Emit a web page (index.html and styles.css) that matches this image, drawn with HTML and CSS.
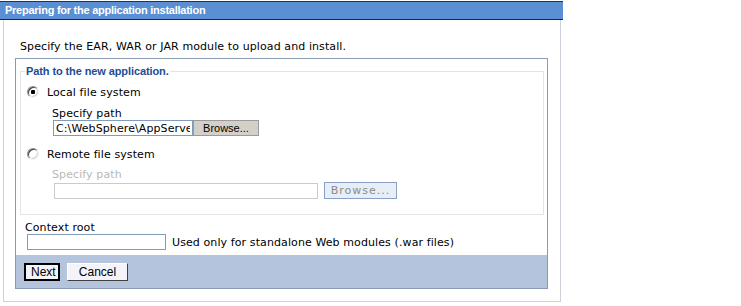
FILE: index.html
```html
<!DOCTYPE html>
<html lang="en">
<head>
    <meta charset="UTF-8">
    <title>Preparing for the application installation</title>
    <link rel="stylesheet" href="styles.css">
</head>
<body>

    <div class="portlet">
        <div class="title-bar">Preparing for the application installation</div>

        <div class="panel">
            <p class="intro">Specify the EAR, WAR or JAR module to upload and install.</p>

            <div class="box">
                <fieldset class="path-set">
                    <legend>Path to the new application.</legend>

                    <label class="option">
                        <input type="radio" name="path" class="radio" checked>
                        <span>Local file system</span>
                    </label>
                    <div class="path-field">
                        <div class="field-label">Specify path</div>
                        <div class="field-row">
                            <input type="text" class="text-input local-input" value="C:\WebSphere\AppServer\installableApps\">
                            <button class="browse-btn">Browse...</button>
                        </div>
                    </div>

                    <label class="option remote">
                        <input type="radio" name="path" class="radio">
                        <span>Remote file system</span>
                    </label>
                    <div class="path-field disabled">
                        <div class="field-label">Specify path</div>
                        <div class="field-row">
                            <input type="text" class="text-input remote-input" disabled>
                            <button class="browse-btn off" disabled>Browse...</button>
                        </div>
                    </div>
                </fieldset>

                <div class="context">
                    <div class="field-label">Context root</div>
                    <div class="context-row">
                        <input type="text" class="text-input context-input">
                        <span class="hint">Used only for standalone Web modules (.war files)</span>
                    </div>
                </div>

                <div class="actions">
                    <button class="btn next">Next</button>
                    <button class="btn cancel">Cancel</button>
                </div>
            </div>
        </div>
    </div>

</body>
</html>
```

FILE: styles.css
```css
body {
    margin: 0;
    background-color: #ffffff;
    font-family: 'DejaVu Sans', Verdana, sans-serif;
    font-size: 11px;
    letter-spacing: 0.1px;
    color: #000000;
}

.portlet {
    width: 563px;
    padding-top: 1px;
}

.title-bar {
    height: 17px;
    line-height: 17px;
    padding-left: 5px;
    background-color: #5b8fd3;
    border-top: 1px solid #1c3260;
    border-bottom: 1px solid #0f2748;
    color: #ffffff;
    font-family: 'Liberation Sans', Arial, sans-serif;
    font-weight: bold;
    font-size: 11px;
    letter-spacing: -0.25px;
}

.panel {
    box-sizing: border-box;
    width: 558px;
    height: 282px;
    margin-left: 3px;
    border: 1px solid #cdd2da;
    border-top: none;
}

.intro {
    margin: 0;
    padding: 20px 0 0 16px;
    line-height: 13px;
}

.box {
    width: 531px;
    margin: 5px 0 0 11px;
    border: 1px solid #8b9ab4;
}

/* fieldset around the two path options */
.path-set {
    margin: 6px 3px 0 4px;
    padding: 0 0 15px 6px;
    border: 1px solid #e2e4e8;
}

.path-set legend {
    margin-left: -2px;
    padding: 0 1px;
    line-height: 13px;
    color: #1d4d94;
    font-family: 'Liberation Sans', Arial, sans-serif;
    font-weight: bold;
    font-size: 11px;
    letter-spacing: -0.1px;
}

.option {
    display: flex;
    align-items: center;
    gap: 8px;
    height: 16px;
    margin-top: 6px;
}

.option.remote {
    margin-top: 10px;
}

.radio {
    appearance: none;
    box-sizing: border-box;
    width: 12px;
    height: 12px;
    margin: 0;
    border-radius: 50%;
    border: 1px solid;
    border-color: #8a8a8a #f4f4f4 #f4f4f4 #8a8a8a;
    background: #ffffff;
    box-shadow: inset 1px 1px 0 #404040, inset -1px -1px 0 #d4d0c8;
}

.radio:checked {
    background: radial-gradient(circle, #000000 0 2px, #ffffff 2.5px);
}

.path-field {
    padding-left: 25px;
}

.field-label {
    line-height: 13px;
    margin-top: 7px;
}

.disabled .field-label {
    margin-top: 6px;
    color: #b8b8b8;
}

.field-row {
    display: flex;
    align-items: flex-end;
}

.disabled .field-row {
    margin-top: 1px;
    gap: 6px;
    padding-left: 2px;
}

.text-input {
    box-sizing: border-box;
    height: 16px;
    margin: 0;
    padding: 0 2px;
    font-family: 'DejaVu Sans', Verdana, sans-serif;
    font-size: 11px;
    letter-spacing: 0.1px;
    color: #000000;
    background: #ffffff;
    outline: none;
}

.local-input {
    width: 140px;
    margin-left: 1px;
    border: 1px solid #7f9db9;
}

.remote-input {
    width: 264px;
    border: 1px solid #c8ccd2;
}

.browse-btn {
    box-sizing: border-box;
    width: 66px;
    height: 16px;
    margin: 0;
    padding: 0;
    background-color: #d4d0c8;
    border: 1px solid #9a9a9a;
    font-family: 'Liberation Sans', Arial, sans-serif;
    font-size: 11px;
    color: #000000;
}

.browse-btn.off {
    width: 73px;
    height: 17px;
    background-color: #e8eef8;
    border-color: #8aa0c4;
    color: #8c8c8c;
    font-family: 'DejaVu Sans', Verdana, sans-serif;
    letter-spacing: 1px;
}

.context {
    padding-left: 9px;
}

.context .field-label {
    margin-top: 6px;
}

.context-row {
    display: flex;
    align-items: center;
    gap: 6px;
}

.context-input {
    width: 139px;
    margin-left: 2px;
    border: 1px solid #7f9db9;
}

.actions {
    display: flex;
    gap: 7px;
    height: 33px;
    margin-top: 5px;
    padding: 8px 0 0 8px;
    box-sizing: border-box;
    background-color: #b5c4dd;
}

.btn {
    box-sizing: border-box;
    height: 18px;
    margin: 0;
    padding: 0 5px;
    font-family: 'Liberation Sans', Arial, sans-serif;
    font-size: 12px;
    color: #000000;
    background-color: #f2f4f9;
}

.btn.next {
    width: 36px;
    border: 2px solid #000000;
}

.btn.cancel {
    width: 61px;
    border: 1px solid;
    border-color: #ffffff #404040 #404040 #ffffff;
}
```
